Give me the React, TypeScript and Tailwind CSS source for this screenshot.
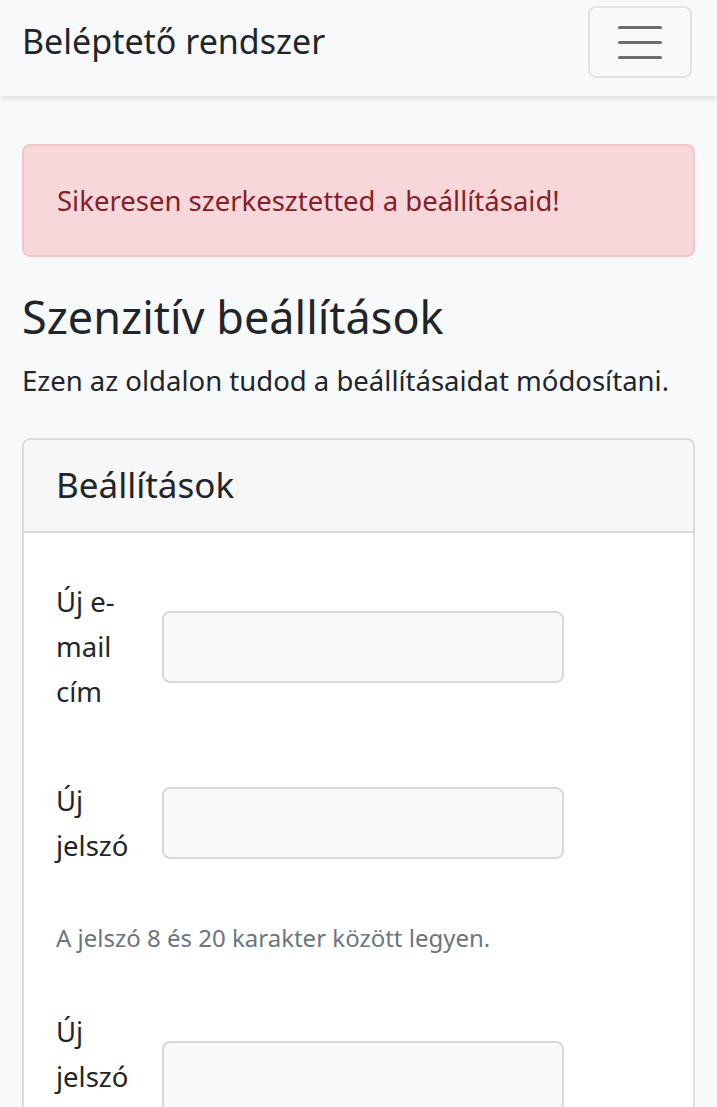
import React from 'react'

const font = { fontFamily: '"Noto Sans", Lato, sans-serif' }

function FormRow({ lines }: { lines: string[] }) {
  return (
    <div className="flex items-center">
      <label className="w-[106px] shrink-0 text-[27.5px] leading-[45px] text-[#212529]">
        {lines.map((l, i) => (
          <span key={i} className="block">{l}</span>
        ))}
      </label>
      <input className="h-[72px] w-[402px] rounded-lg border-2 border-[#d5d8dc] bg-[#f8f9fa] px-4 text-[26px] outline-none" />
    </div>
  )
}

export default function App() {
  return (
    <div className="min-h-screen bg-[#f8f9fa] text-[#212529]" style={font}>
      {/* Navbar */}
      <nav className="relative z-10 flex h-[96px] items-start justify-between bg-[#f8f9fa] pl-[22px] pr-[25px] pt-[6px] shadow-[0_2px_6px_rgba(0,0,0,0.12)]">
        <span className="mt-[13px] text-[34px] leading-[44px] text-[#212529]">Beléptető rendszer</span>
        <button className="flex h-[72px] w-[104px] flex-col items-center justify-center gap-[12px] rounded-lg border-2 border-[#e2e4e6] bg-transparent">
          <span className="block h-[3px] w-[44px] rounded bg-[#6b6d70]" />
          <span className="block h-[3px] w-[44px] rounded bg-[#6b6d70]" />
          <span className="block h-[3px] w-[44px] rounded bg-[#6b6d70]" />
        </button>
      </nav>

      <main className="px-[22px] pt-[48px]">
        {/* Alert */}
        <div className="flex h-[113px] items-center rounded-lg border-2 border-[#f3c4c9] bg-[#f8d7da] px-[33px] text-[27.5px] text-[#842029]">
          Sikeresen szerkesztetted a beállításaid!
        </div>

        <h1 className="mt-[31px] text-[45px] leading-[58px] text-[#212529]">Szenzitív beállítások</h1>
        <p className="mt-[15px] text-[27.5px] leading-[40px]">Ezen az oldalon tudod a beállításaidat módosítani.</p>

        {/* Card */}
        <div className="mt-[37px] overflow-hidden rounded-lg border-2 border-[#dcdcdc] bg-white">
          <div className="flex h-[93px] items-center border-b-2 border-[#dcdcdc] bg-[#f7f7f7] px-[32px] text-[35px]">
            Beállítások
          </div>
          <div className="px-[32px] pb-[40px] pt-[46px]">
            <FormRow lines={['Új e-', 'mail', 'cím']} />
            <div className="mt-[64px]">
              <FormRow lines={['Új', 'jelszó']} />
            </div>
            <p className="mt-[53px] text-[24px] leading-[33px] text-[#6c757d]">
              A jelszó 8 és 20 karakter között legyen.
            </p>
            <div className="mt-[55px]">
              <FormRow lines={['Új', 'jelszó', 'újra']} />
            </div>
          </div>
        </div>
      </main>
    </div>
  )
}
